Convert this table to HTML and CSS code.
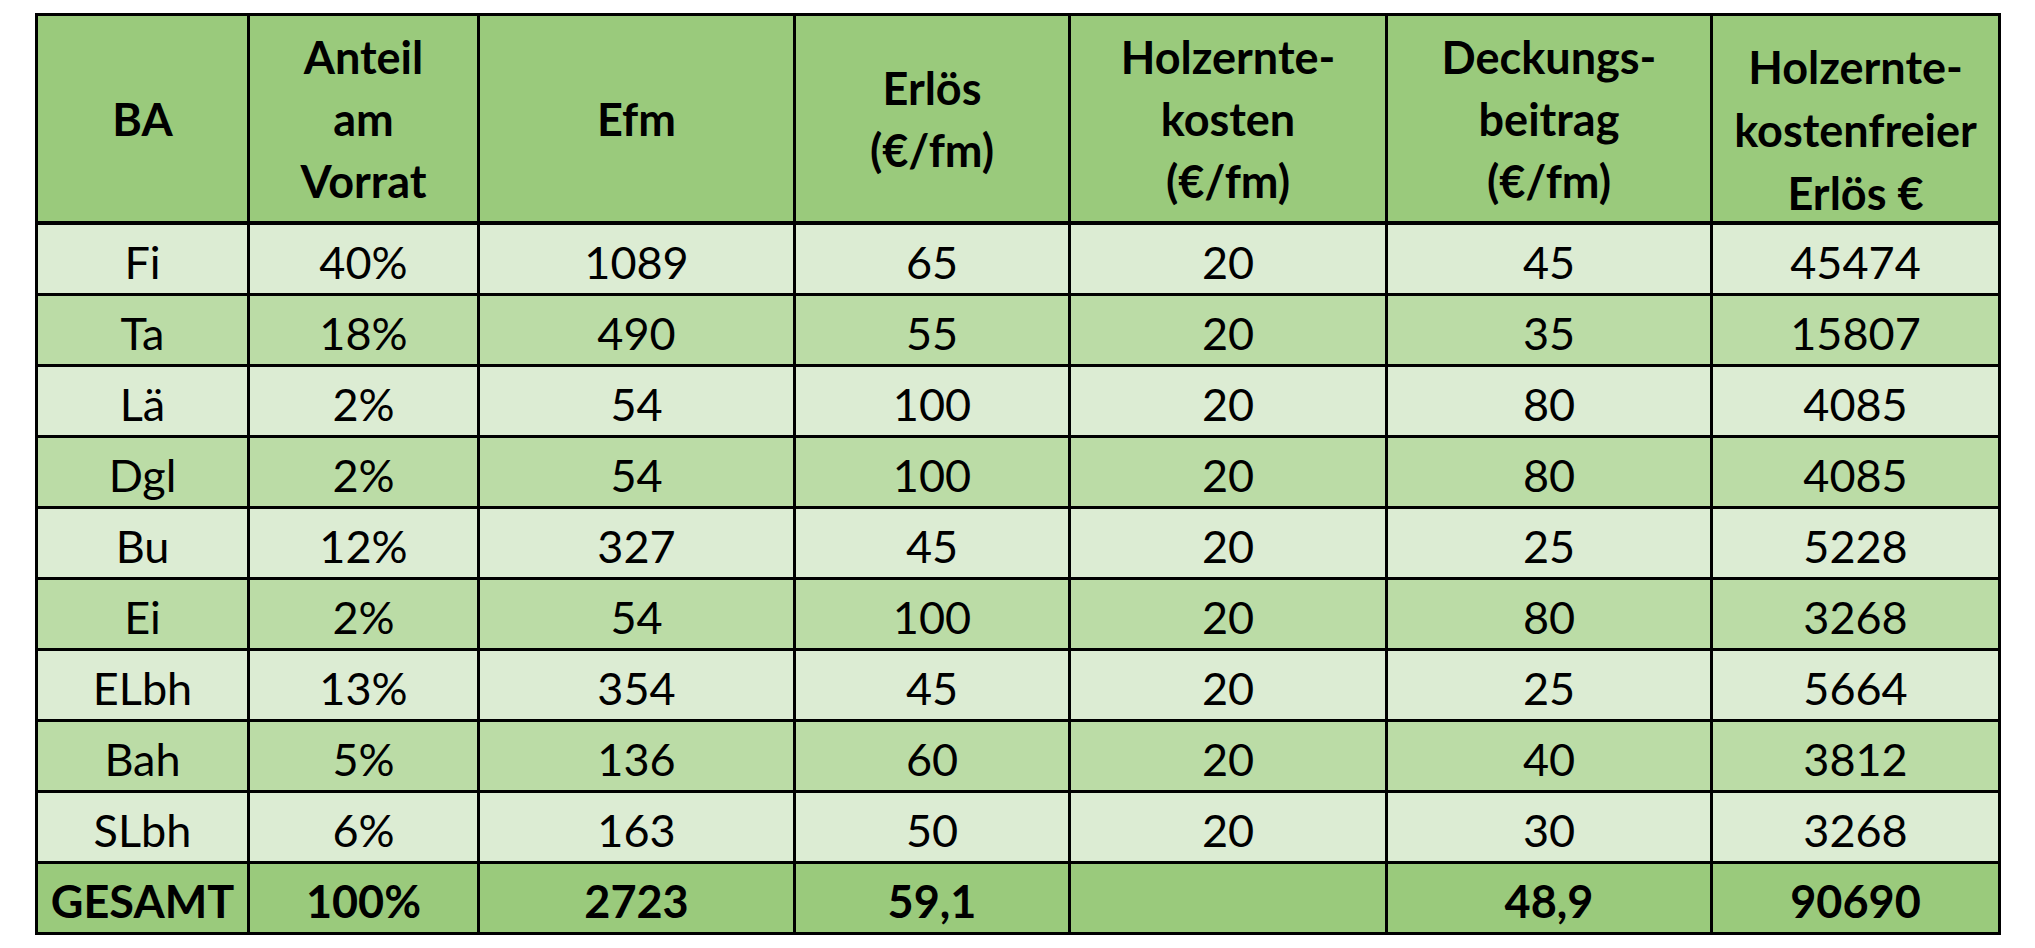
FILE: index.html
```html
<!DOCTYPE html>
<html lang="de">
<head>
<meta charset="utf-8">
<title>Holzerntekostenfreier Erlös</title>
<link rel="stylesheet" href="styles.css">
</head>
<body>
<div class="sheet">
  <div class="cell head">BA</div>
  <div class="cell head">Anteil<br>am<br>Vorrat</div>
  <div class="cell head">Efm</div>
  <div class="cell head">Erlös<br>(€/fm)</div>
  <div class="cell head">Holzernte-<br>kosten<br>(€/fm)</div>
  <div class="cell head">Deckungs-<br>beitrag<br>(€/fm)</div>
  <div class="cell head last">Holzernte-<br>kostenfreier<br>Erlös €</div>

  <div class="cell light">Fi</div><div class="cell light">40%</div><div class="cell light">1089</div><div class="cell light">65</div><div class="cell light">20</div><div class="cell light">45</div><div class="cell light">45474</div>
  <div class="cell mid">Ta</div><div class="cell mid">18%</div><div class="cell mid">490</div><div class="cell mid">55</div><div class="cell mid">20</div><div class="cell mid">35</div><div class="cell mid">15807</div>
  <div class="cell light">Lä</div><div class="cell light">2%</div><div class="cell light">54</div><div class="cell light">100</div><div class="cell light">20</div><div class="cell light">80</div><div class="cell light">4085</div>
  <div class="cell mid">Dgl</div><div class="cell mid">2%</div><div class="cell mid">54</div><div class="cell mid">100</div><div class="cell mid">20</div><div class="cell mid">80</div><div class="cell mid">4085</div>
  <div class="cell light">Bu</div><div class="cell light">12%</div><div class="cell light">327</div><div class="cell light">45</div><div class="cell light">20</div><div class="cell light">25</div><div class="cell light">5228</div>
  <div class="cell mid">Ei</div><div class="cell mid">2%</div><div class="cell mid">54</div><div class="cell mid">100</div><div class="cell mid">20</div><div class="cell mid">80</div><div class="cell mid">3268</div>
  <div class="cell light">ELbh</div><div class="cell light">13%</div><div class="cell light">354</div><div class="cell light">45</div><div class="cell light">20</div><div class="cell light">25</div><div class="cell light">5664</div>
  <div class="cell mid">Bah</div><div class="cell mid">5%</div><div class="cell mid">136</div><div class="cell mid">60</div><div class="cell mid">20</div><div class="cell mid">40</div><div class="cell mid">3812</div>
  <div class="cell light">SLbh</div><div class="cell light">6%</div><div class="cell light">163</div><div class="cell light">50</div><div class="cell light">20</div><div class="cell light">30</div><div class="cell light">3268</div>

  <div class="cell total">GESAMT</div><div class="cell total">100%</div><div class="cell total">2723</div><div class="cell total">59,1</div><div class="cell total"></div><div class="cell total">48,9</div><div class="cell total">90690</div>
</div>
</body>
</html>
```
FILE: styles.css
```css
html, body {
  margin: 0;
  padding: 0;
  background: #ffffff;
}

body {
  font-family: Lato, "Open Sans", "Noto Sans", sans-serif;
  color: #000000;
}

.sheet {
  display: grid;
  grid-template-columns: 209px 227px 313px 272px 314px 322px 285px;
  grid-template-rows: 206px repeat(10, 68px);
  gap: 3px;
  padding: 3px;
  width: max-content;
  margin: 13px 0 0 35px;
  background: #000000;
}

.cell {
  display: flex;
  align-items: center;
  justify-content: center;
  text-align: center;
  box-sizing: border-box;
  font-size: 45px;
  line-height: 54px;
  padding-top: 6px;
}

.head {
  background: #9aca7c;
  font-weight: 700;
  line-height: 62px;
  padding-top: 0;
  box-shadow: inset 0 -1px 0 #000000;
}

.head.last {
  line-height: 63px;
  padding-top: 22px;
}

.light {
  background: #dcecd3;
}

.mid {
  background: #bbdca6;
}

.total {
  background: #9aca7c;
  font-weight: 700;
}
```
